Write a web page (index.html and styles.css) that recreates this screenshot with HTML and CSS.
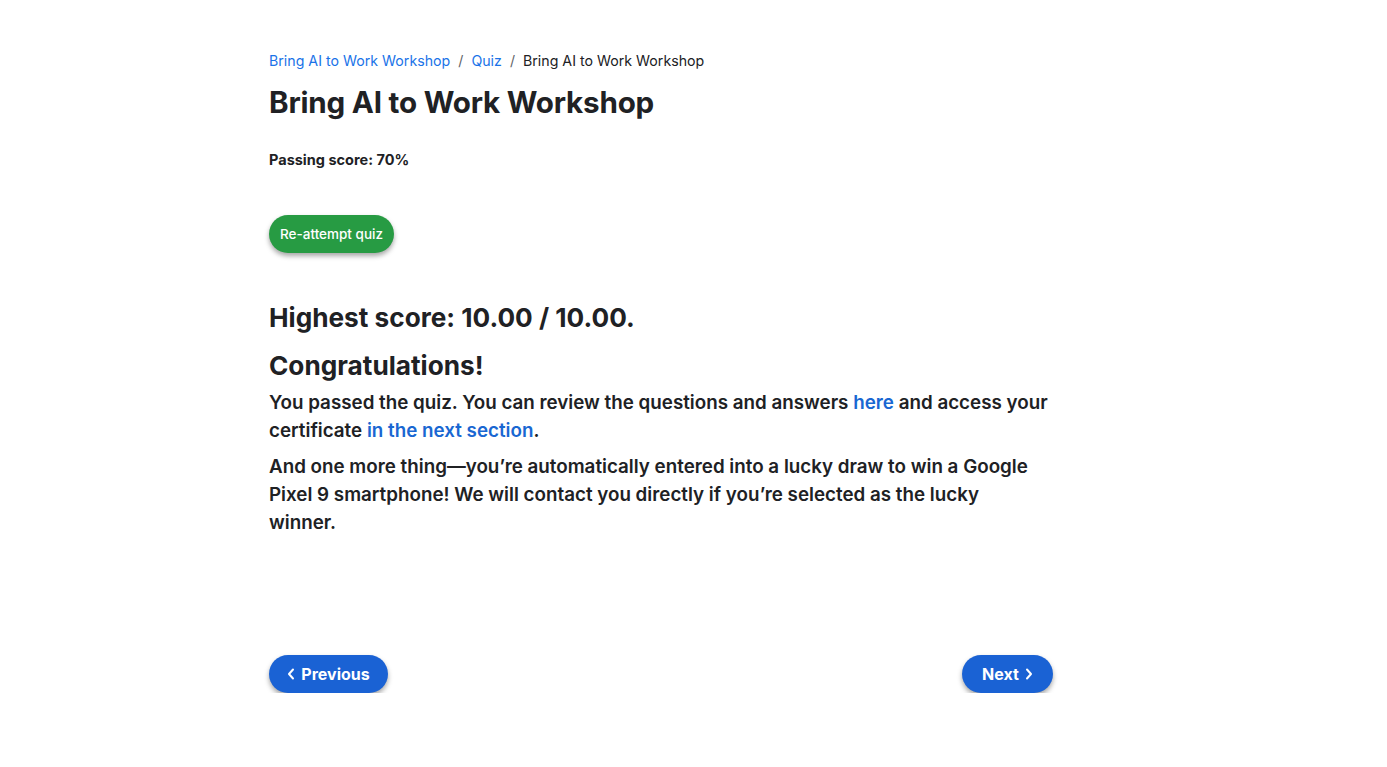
FILE: index.html
```html
<!DOCTYPE html>
<html lang="en">
<head>
<meta charset="utf-8">
<title>Bring AI to Work Workshop</title>
<link rel="stylesheet" href="styles.css">
</head>
<body>
<main class="page">
  <nav class="crumbs">
    <a href="#">Bring AI to Work Workshop</a>
    <span class="sep">/</span>
    <a href="#">Quiz</a>
    <span class="sep">/</span>
    <span class="current">Bring AI to Work Workshop</span>
  </nav>
  <h1 class="title">Bring AI to Work Workshop</h1>
  <p class="passing">Passing score: 70%</p>
  <button class="btn-green">Re-attempt quiz</button>
  <h2 class="score">Highest score: 10.00 / 10.00.</h2>
  <h2 class="congrats">Congratulations!</h2>
  <p class="body">You passed the quiz. You can review the questions and answers <a href="#">here</a> and access your certificate <a href="#">in the next section</a>.</p>
  <p class="body">And one more thing—you’re automatically entered into a lucky draw to win a Google Pixel 9 smartphone! We will contact you directly if you’re selected as the lucky winner.</p>
  <div class="nav">
    <button class="btn-blue prev"><svg class="chev" viewBox="0 0 8 12" width="8" height="12"><path d="M6 1.5 L2 6 L6 10.5" fill="none" stroke="#fff" stroke-width="2" stroke-linecap="round" stroke-linejoin="round"/></svg>Previous</button>
    <button class="btn-blue next">Next<svg class="chev" viewBox="0 0 8 12" width="8" height="12"><path d="M2 1.5 L6 6 L2 10.5" fill="none" stroke="#fff" stroke-width="2" stroke-linecap="round" stroke-linejoin="round"/></svg></button>
  </div>
</main>
</body>
</html>
```
FILE: styles.css
```css
html, body {
  margin: 0;
  padding: 0;
  background: #fff;
}
body {
  font-family: "Inter", "Roboto", sans-serif;
  color: #202124;
}
.page {
  width: 784px;
  margin-left: 269px;
  padding-top: 51px;
}
.crumbs {
  font-size: 14.2px;
  line-height: 20px;
  color: #202124;
}
.crumbs a {
  color: #1a73e8;
  text-decoration: none;
}
.crumbs .sep {
  color: #5f6368;
  margin: 0 4px;
}
.title {
  font-size: 29.6px;
  font-weight: 700;
  margin: 11px 0 0;
  line-height: 40px;
  letter-spacing: -0.2px;
}
.passing {
  font-size: 14.5px;
  font-weight: 700;
  margin: 28px 0 0;
  line-height: 20px;
}
.btn-green {
  margin-top: 45px;
  background: #279b43;
  color: #fff;
  border: none;
  border-radius: 20px;
  height: 38px;
  width: 125px;
  padding: 0;
  font-family: inherit;
  font-size: 13.5px;
  font-weight: 500;
  box-shadow: 0 3px 5px rgba(0,0,0,0.35);
  display: block;
}
.score {
  font-size: 26.2px;
  font-weight: 700;
  margin: 47px 0 0;
  line-height: 36px;
}
.congrats {
  font-size: 26.2px;
  font-weight: 700;
  margin: 12px 0 0;
  line-height: 36px;
}
.body {
  font-size: 18.8px;
  font-weight: 600;
  line-height: 28px;
  margin: 5px 0 0;
  width: 780px;
}
.body + .body {
  margin-top: 8px;
}
.body a {
  color: #1967d2;
  text-decoration: none;
}
.nav {
  display: flex;
  justify-content: space-between;
  margin-top: 118px;
}
.btn-blue {
  background: #1a62d4;
  color: #fff;
  border: none;
  border-radius: 20px;
  height: 38px;
  padding: 0;
  font-family: inherit;
  font-size: 16px;
  font-weight: 700;
  box-shadow: 0 3px 5px rgba(0,0,0,0.35);
  display: flex;
  align-items: center;
  justify-content: center;
  gap: 6px;
}
.btn-blue.prev {
  width: 119px;
}
.btn-blue.next {
  width: 91px;
}
.chev {
  display: block;
}
```
